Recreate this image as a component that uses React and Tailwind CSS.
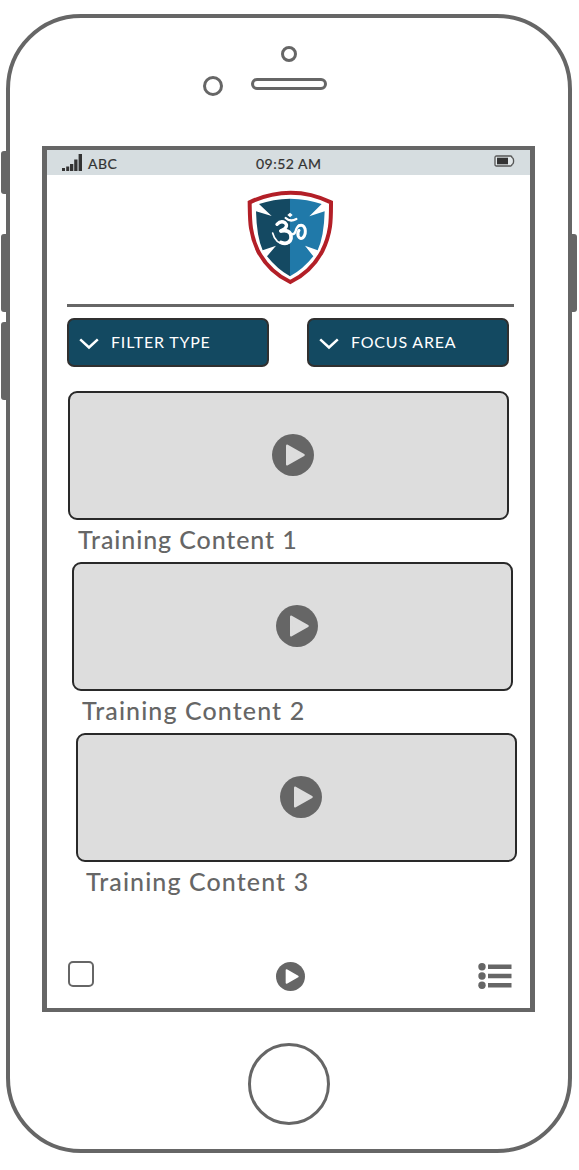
const trainings = [
  { title: 'Training Content 1', offset: 'pl-[21px]', spacing: 'tracking-[0.9px]' },
  { title: 'Training Content 2', offset: 'pl-[25px]', spacing: 'tracking-[1.1px]' },
  { title: 'Training Content 3', offset: 'pl-[29px]', spacing: 'tracking-[1.1px]' },
];

function PlayIcon({ className, hole }) {
  return (
    <svg viewBox="0 0 42 42" className={className}>
      <circle cx="21" cy="21" r="21" fill="#666" />
      <path d="M15.2 11.7 L31.6 21 L15.2 30.3 Z" fill={hole} stroke={hole} strokeWidth="2.4" strokeLinejoin="round" />
    </svg>
  );
}

function ShieldLogo() {
  return (
    <svg viewBox="0 0 360 330" className="h-[110px] w-[120px]">
      <path d="M59 67 Q119 38 182 38 Q244 38 303 67 C303 118 304 158 277 213 Q244 276 181 306 Q117 276 84 213 C58 158 60 118 59 67Z" fill="#fff" stroke="#b31f27" strokeWidth="12" />
      <path d="M180 56 V289 Q142 268 111 229 L138 197 L98 211 Q80 171 78 94 L125 108 L87 72 Q129 57 180 56Z" fill="#144962" />
      <path d="M180 56 Q234 57 275 72 L238 109 L284 94 Q282 170 263 211 L225 197 L250 229 Q219 268 180 289Z" fill="#2079a9" />
      <g fill="none" stroke="#fff" strokeLinecap="round" strokeLinejoin="round">
        <path d="M141 133 Q152 121 165 128 Q175 137 163 147 L152 153" strokeWidth="10" />
        <path d="M154 153 Q174 149 181 161 Q188 179 175 187 Q166 193 153 187" strokeWidth="11" />
        <path d="M175 190 Q157 197 142 184 Q131 173 128 159" strokeWidth="5" />
        <path d="M185 163 Q195 163 197 153 Q200 140 208 137" strokeWidth="7" />
        <path d="M207 137 Q220 132 225 146 Q229 163 219 173 Q210 179 205 169 Q201 159 207 151" strokeWidth="9" />
        <path d="M167 114 Q180 127 199 117" strokeWidth="7" />
      </g>
      <path d="M180 98 L188 105 L180 112 L172 105Z" fill="#fff" />
    </svg>
  );
}

function FilterButton({ label }) {
  return (
    <button className="flex h-[49px] w-[202px] items-center rounded-[7px] border-2 border-[#303030] bg-[#134961] pb-[2px] pl-[10px] text-left text-[16px] text-white">
      <svg viewBox="0 0 20 12" className="mt-1 mr-[12px] h-3 w-5" fill="none" stroke="white" strokeWidth="2.5">
        <path d="M1.2 1.3 L10 9.5 L18.8 1.3" />
      </svg>
      <span className="tracking-[0.8px]">{label}</span>
    </button>
  );
}

function StatusBar() {
  return (
    <div className="flex h-[25px] items-start bg-[#d6dde0] text-[14px] leading-[27px] text-[#333] [-webkit-text-stroke:0.2px_#333]">
      <svg viewBox="0 0 21 17" className="mt-1 ml-[15px] h-[17px] w-[21px]" fill="#333">
        <path d="M0 14h3v3H0z M4.2 12.5h3V17h-3z M8 10h3.3v7H8z M12.2 5.5h3.3V17h-3.3z M16.6 0h3.4v17h-3.4z" />
      </svg>
      <span className="ml-[5px] w-[168px] tracking-[0.5px]">ABC</span>
      <span className="w-[238px] tracking-[0.5px]">09:52 AM</span>
      <svg viewBox="0 0 21 12" className="mt-[5px] h-3 w-[21px]">
        <path d="M2.5 1H16.5Q18 1 18 2.5Q19.6 3 19.6 6Q19.6 9 18 9.5Q18 11 16.5 11H2.5Q1 11 1 9.5V2.5Q1 1 2.5 1Z" fill="#e3e8ea" stroke="#555" strokeWidth="1.3" />
        <path d="M3 2.7H14V9.3H3Z" fill="#333" />
      </svg>
    </div>
  );
}

function Screen() {
  return (
    <main className="ml-[36px] flex h-[866px] w-[493px] flex-col border-x-[5px] border-y-[4px] border-[#666] bg-white">
      <StatusBar />
      <div className="ml-[183px] mt-[5px] h-[110px]"><ShieldLogo /></div>
      <hr className="mt-[14px] ml-5 h-[3px] w-[447px] border-0 bg-[#666]" />
      <div className="mt-[11px] ml-5 flex gap-[38px]">
        <FilterButton label="FILTER TYPE" />
        <FilterButton label="FOCUS AREA" />
      </div>
      <div className="mt-6 flex flex-col">
        {trainings.map((item) => (
          <article key={item.title} className={`h-[171px] ${item.offset}`}>
            <div className="flex h-[129px] w-[441px] items-center justify-center rounded-[9px] border-[2.5px] border-[#292929] bg-[#ddd] pl-[8px] pb-[2px]">
              <PlayIcon className="h-[42px] w-[42px]" hole="#ddd" />
            </div>
            <h2 className={`ml-[10px] mt-[2px] text-[25px] leading-[34px] font-medium text-[#666] ${item.spacing}`}>{item.title}</h2>
          </article>
        ))}
      </div>
      <nav className="mt-[57px] flex items-start pl-[21px]">
        <div className="h-[26px] w-[26px] rounded-[5px] border-2 border-[#666]" />
        <PlayIcon className="ml-[182px] mt-px h-[29px] w-[29px]" hole="#fff" />
        <svg viewBox="0 0 34 26" className="ml-[173px] mt-[2px] h-[26px] w-[34px]" fill="#666">
          <circle cx="4" cy="3.7" r="3.7" /><circle cx="4" cy="13" r="3.7" /><circle cx="4" cy="22.3" r="3.7" />
          <path d="M10 1.4h23.5v4.6H10z M10 10.7h23.5v4.6H10z M10 20h23.5v4.6H10z" />
        </svg>
      </nav>
    </main>
  );
}

export default function App() {
  return (
    <div className="flex h-[1170px] w-[579px] overflow-hidden bg-white font-['Lato','Liberation_Sans',sans-serif]">
      <div className="flex w-[7px] shrink-0 flex-col items-end pt-[151px]">
        <div className="h-[43px] w-[6px] rounded-l-[3px] bg-[#666]" />
        <div className="mt-10 h-[78px] w-[6px] rounded-l-[3px] bg-[#666]" />
        <div className="mt-[10px] h-[78px] w-[6px] rounded-l-[3px] bg-[#666]" />
      </div>
      <div className="-ml-px mt-[14px] flex h-[1139px] w-[566px] shrink-0 flex-col rounded-[75px] border-4 border-[#666] bg-white">
        <div className="flex h-[128px] shrink-0 items-start">
          <div className="ml-[193px] mt-[58px] size-5 rounded-full border-[3px] border-[#666]" />
          <div className="ml-[28px] mt-[28px] flex flex-col items-center">
            <div className="size-4 rounded-full border-[3px] border-[#666]" />
            <div className="mt-4 h-[12px] w-[76px] rounded-full border-[3px] border-[#666]" />
          </div>
        </div>
        <div className="-ml-[4px]"><Screen /></div>
        <div className="mt-[31px] ml-[238px] size-[82px] shrink-0 rounded-full border-[3px] border-[#666]" />
      </div>
      <div className="-ml-px mt-[234px] h-[78px] w-[6px] shrink-0 rounded-r-[3px] bg-[#666]" />
    </div>
  );
}
